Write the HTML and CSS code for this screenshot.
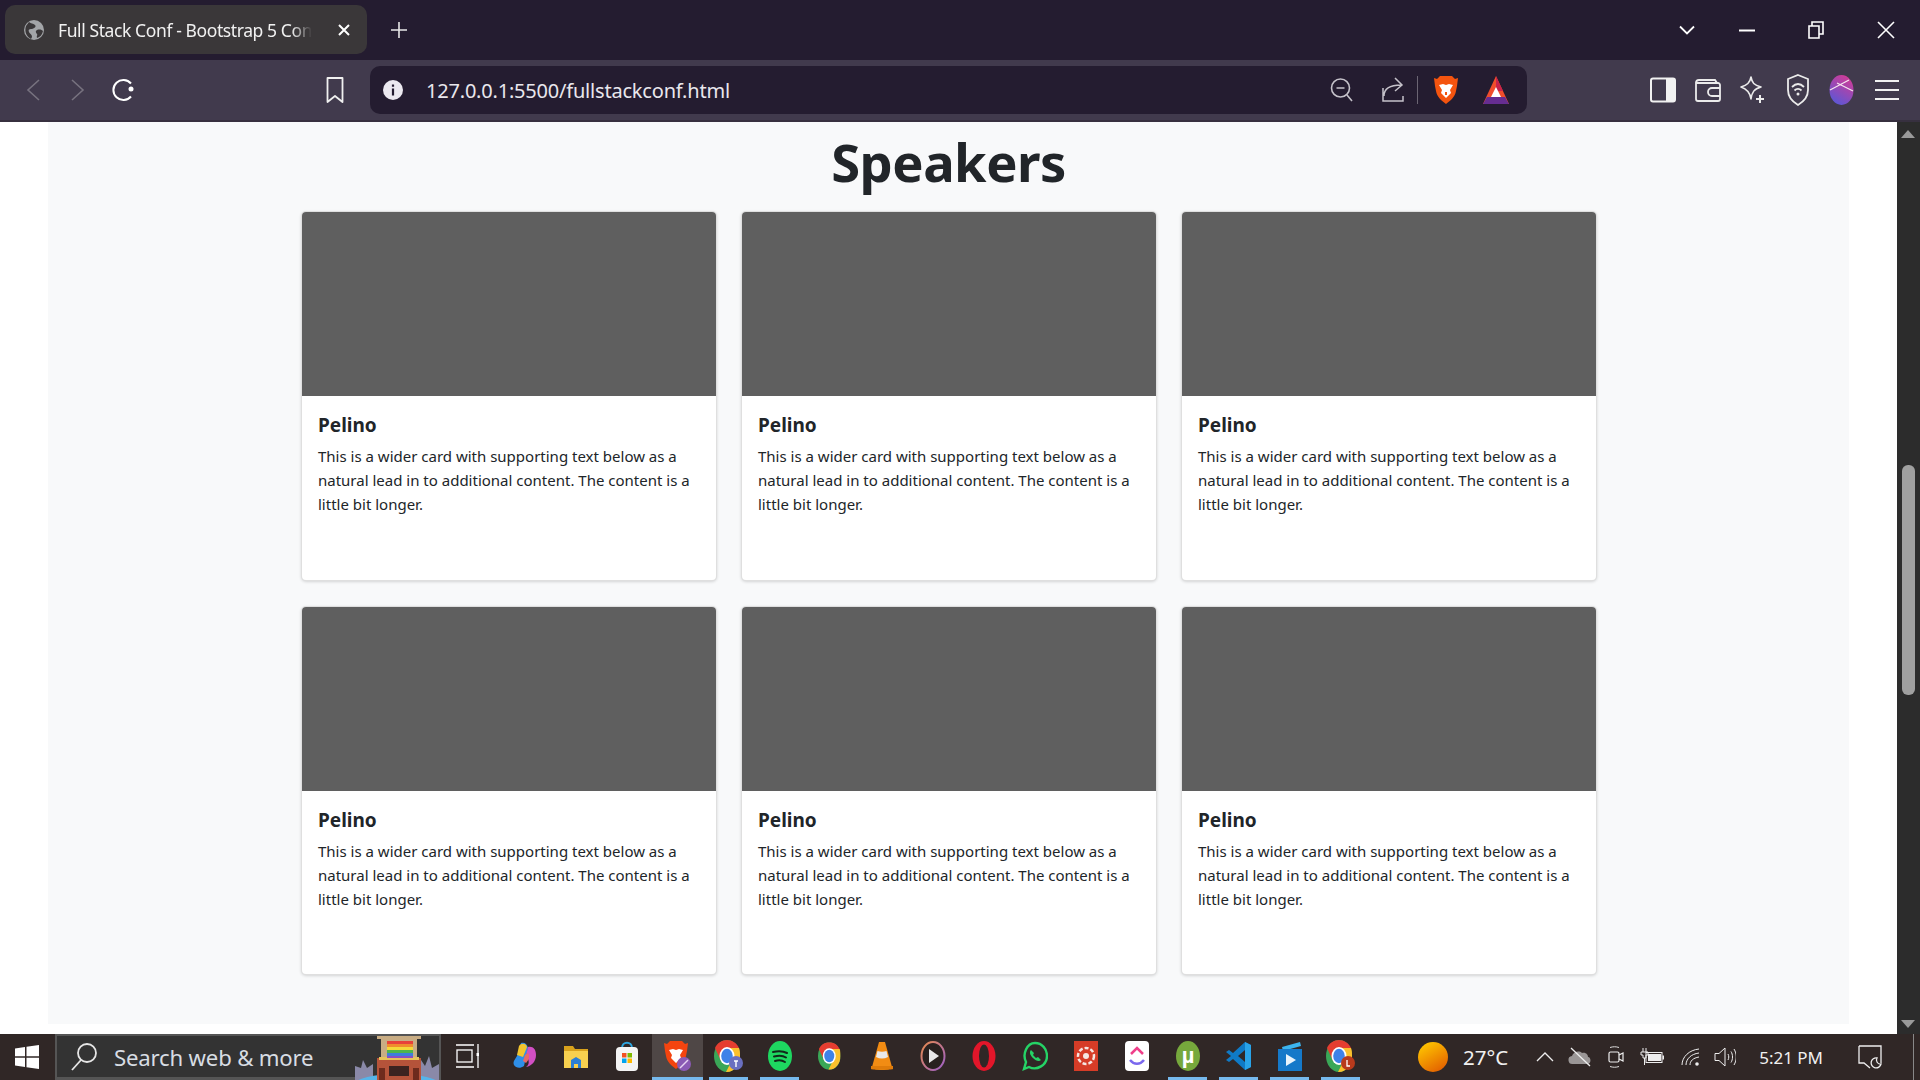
FILE: index.html
```html
<!DOCTYPE html>
<html lang="en">
<head>
    <meta charset="UTF-8">
    <title>Full Stack Conf - Bootstrap 5 Conference</title>
    <link rel="stylesheet" href="styles.css">
</head>
<body>
<div class="tabbar">
    <div class="tab">
        <svg class="favicon" width="22" height="22" viewBox="0 0 22 22"><circle cx="11" cy="11" r="10" fill="#a3a5a8"/><path d="M6 3c2 2 4 1 6 3s-2 4-4 4-3 1-2 3 3 2 3 5l-1 2C4 18 1 13 3 7zM14 11c3-1 5 0 6 1-1 4-3 6-6 7-1-2 1-3 0-4s-2-3 0-4z" fill="#3a3739"/></svg>
        <span class="tab-title">Full Stack Conf - Bootstrap 5 Con</span>
        <svg class="tab-close" width="12" height="12" viewBox="0 0 12 12"><path d="M1 1l10 10M11 1L1 11" stroke="#fff" stroke-width="2"/></svg>
    </div>
    <svg class="new-tab" width="16" height="16" viewBox="0 0 16 16"><path d="M8 0v16M0 8h16" stroke="#e8e8e8" stroke-width="1.6"/></svg>
    <div class="window-controls">
        <svg class="win-btn" width="16" height="10" viewBox="0 0 16 10"><path d="M1 1.5l7 7 7-7" fill="none" stroke="#fff" stroke-width="1.8"/></svg>
        <svg class="win-btn" width="16" height="3" viewBox="0 0 16 3"><path d="M0 1.5h16" stroke="#fff" stroke-width="2"/></svg>
        <svg class="win-btn" width="16" height="18" viewBox="0 0 16 18"><path d="M1 5h10v12H1zM4 5V1h11v12h-4" fill="none" stroke="#fff" stroke-width="1.6"/></svg>
        <svg class="win-btn" width="18" height="18" viewBox="0 0 18 18"><path d="M1 1l16 16M17 1L1 17" stroke="#fff" stroke-width="1.6"/></svg>
    </div>
</div>

<div class="toolbar">
    <div class="nav-buttons">
        <svg width="16" height="24" viewBox="0 0 16 24"><path d="M14 2L3 12l11 10" fill="none" stroke="#77727f" stroke-width="1.6"/></svg>
        <svg class="nav-forward" width="16" height="24" viewBox="0 0 16 24"><path d="M2 2l11 10L2 22" fill="none" stroke="#77727f" stroke-width="1.6"/></svg>
        <svg class="nav-reload" width="26" height="26" viewBox="0 0 26 26"><path d="M21 6.500A10 10 0 1 0 21 19.500" fill="none" stroke="#fff" stroke-width="2"/><circle cx="21" cy="12" r="2.500" fill="#fff"/></svg>
    </div>
    <svg class="bookmark" width="20" height="28" viewBox="0 0 20 28"><path d="M2.500 2h15v24l-7.500-6-7.500 6z" fill="none" stroke="#f0f0f0" stroke-width="1.8" stroke-linejoin="round"/></svg>
    <div class="urlbar">
        <svg class="info" width="20" height="20" viewBox="0 0 20 20"><circle cx="10" cy="10" r="10" fill="#ece9f0"/><path d="M10 4.500v2.200M10 8.500v7" stroke="#241c30" stroke-width="2.200"/></svg>
        <span class="url">127.0.0.1:5500/fullstackconf.html</span>
        <div class="url-actions">
            <svg width="24" height="26" viewBox="0 0 24 26"><circle cx="10.500" cy="11" r="9" fill="none" stroke="#c5c2ca" stroke-width="1.600"/><path d="M6.500 11h8M17 18l5 6" stroke="#c5c2ca" stroke-width="1.600"/></svg>
            <svg class="share" width="24" height="28" viewBox="0 0 24 28"><path d="M2 12v13h20v-5M3 20c0-7 5-11 17-11M14 2l7 7-7 6" fill="none" stroke="#c5c2ca" stroke-width="1.500"/></svg>
            <span class="url-sep"></span>
            <svg class="brave-shield" width="24" height="30" viewBox="0 0 24 30"><path d="M6 1h12l3 3 3-1-1 8-1 5c-1 6-6 10-10 13C8 26 3 22 2 16L1 11 0 3l3 1z" fill="#f4540f"/><path d="M5 10l4-1 3 1 3-1 4 1-3 5 1 3-5 5-5-5 1-3z" fill="#fff"/><path d="M11 17h2v3h-2z" fill="#f4540f"/></svg>
            <svg class="bat" width="26" height="28" viewBox="0 0 26 28"><path d="M13 0l13 28H0z" fill="#f14d2c"/><path d="M13 0l7 15H13z" fill="#c9234a"/><path d="M0 28l4-7h18l4 7z" fill="#662d91"/><path d="M13 11l5 10H8z" fill="#fff"/></svg>
        </div>
    </div>
    <div class="toolbar-icons">
        <svg width="26" height="26" viewBox="0 0 26 26"><rect x="1" y="1.500" width="24" height="23" rx="2" fill="none" stroke="#f2f2f2" stroke-width="2"/><path d="M16 1.500h7a2 2 0 0 1 2 2v19a2 2 0 0 1-2 2h-7z" fill="#f2f2f2"/></svg>
        <svg width="26" height="26" viewBox="0 0 26 26"><path d="M1 6a3 3 0 0 1 3-3h16l2 3M1 6v16a2 2 0 0 0 2 2h20a2 2 0 0 0 2-2V8a2 2 0 0 0-2-2H1zM25 11h-8a3 3 0 0 0 0 8h8" fill="none" stroke="#ebebeb" stroke-width="1.800"/></svg>
        <svg width="26" height="30" viewBox="0 0 26 30"><path d="M12 2c1 6 3 8 10 10-7 2-9 5-10 12-1-7-4-10-10-12 6-2 9-4 10-10z" fill="none" stroke="#ebebeb" stroke-width="1.600" stroke-linejoin="round"/><path d="M21 20v8M17 24h8" stroke="#ebebeb" stroke-width="2"/></svg>
        <svg width="24" height="32" viewBox="0 0 24 32"><path d="M12 1l10 4v11c0 7-5 12-10 15C7 28 2 23 2 16V5z" fill="none" stroke="#ebebeb" stroke-width="1.800"/><path d="M6 13c4-4 8-4 12 0M8.500 16.500c2-2 5-2 7 0" fill="none" stroke="#ebebeb" stroke-width="1.800"/><circle cx="12" cy="20" r="1.500" fill="#ebebeb"/></svg>
        <svg width="25" height="30" viewBox="0 0 25 30"><defs><linearGradient id="prof" x1="0.800" y1="0" x2="0.300" y2="1"><stop offset="0" stop-color="#d63a94"/><stop offset="1" stop-color="#5b57d6"/></linearGradient></defs><ellipse cx="12.500" cy="15" rx="12" ry="15" fill="url(#prof)"/><path d="M1 15L20 5M8 8l16 8" stroke="#f6e4ef" stroke-width="1.200"/></svg>
        <svg width="26" height="22" viewBox="0 0 26 22"><path d="M1 2h24M1 11h24M1 20h24" stroke="#f2f2f2" stroke-width="2"/></svg>
    </div>
</div>

<div class="viewport">
    <main class="page">
        <section class="speakers">
            <h1>Speakers</h1>
            <div class="card-grid">
                <div class="card">
                    <div class="card-img"></div>
                    <div class="card-body">
                        <h5>Pelino</h5>
                        <p>This is a wider card with supporting text below as a natural lead in to additional content. The content is a little bit longer.</p>
                    </div>
                </div>
                <div class="card">
                    <div class="card-img"></div>
                    <div class="card-body">
                        <h5>Pelino</h5>
                        <p>This is a wider card with supporting text below as a natural lead in to additional content. The content is a little bit longer.</p>
                    </div>
                </div>
                <div class="card">
                    <div class="card-img"></div>
                    <div class="card-body">
                        <h5>Pelino</h5>
                        <p>This is a wider card with supporting text below as a natural lead in to additional content. The content is a little bit longer.</p>
                    </div>
                </div>
                <div class="card">
                    <div class="card-img"></div>
                    <div class="card-body">
                        <h5>Pelino</h5>
                        <p>This is a wider card with supporting text below as a natural lead in to additional content. The content is a little bit longer.</p>
                    </div>
                </div>
                <div class="card">
                    <div class="card-img"></div>
                    <div class="card-body">
                        <h5>Pelino</h5>
                        <p>This is a wider card with supporting text below as a natural lead in to additional content. The content is a little bit longer.</p>
                    </div>
                </div>
                <div class="card">
                    <div class="card-img"></div>
                    <div class="card-body">
                        <h5>Pelino</h5>
                        <p>This is a wider card with supporting text below as a natural lead in to additional content. The content is a little bit longer.</p>
                    </div>
                </div>
            </div>
        </section>
    </main>
    <div class="scrollbar">
        <span class="arrow-up"></span>
        <span class="thumb"></span>
        <span class="arrow-down"></span>
    </div>
</div>

<footer class="taskbar">
    <div class="start">
        <svg width="24" height="24" viewBox="0 0 24 24"><path d="M0 3.500l10-1.500v9.200H0zM11.500 1.800L24 0v11.200H11.500zM0 12.800h10V22L0 20.500zM11.500 12.800H24V24l-12.500-1.800z" fill="#fff"/></svg>
    </div>
    <div class="search">
        <svg width="28" height="30" viewBox="0 0 28 30"><circle cx="17" cy="11" r="9" fill="none" stroke="#e6e6e6" stroke-width="1.800"/><path d="M11 18L2 28" stroke="#e6e6e6" stroke-width="1.800"/></svg>
        <span class="search-text">Search web &amp; more</span>
        <svg class="search-art" width="88" height="44" viewBox="0 0 84 44"><path d="M0 44V30l6 2 2-8 4 8 6-4v16zM66 44V24l4 6 4-10 3 12 7-4v16z" fill="#8a89a8"/><ellipse cx="42" cy="48" rx="42" ry="10" fill="#56b4e9"/><path d="M22 0h44v3H22zM26 3h36v20H26z" fill="#c9ad84"/><path d="M22 22h44v22H22z" fill="#b5533a"/><path d="M24 21h40v3H24z" fill="#e8c35a"/><path d="M34 30h20v10H34z" fill="#3b2320"/><path d="M24 32h6v12h-6zM58 32h6v12h-6z" fill="#6e2b1d"/><rect x="32" y="5" width="26" height="3" fill="#e8413a"/><rect x="32" y="8" width="26" height="3" fill="#f08c2e"/><rect x="32" y="11" width="26" height="3" fill="#f4d93a"/><rect x="32" y="14" width="26" height="3" fill="#4fb64a"/><rect x="32" y="17" width="26" height="3" fill="#3e7fd9"/><rect x="32" y="20" width="26" height="2" fill="#8b4fc2"/></svg>
    </div>
    <div class="task-icons">
        <div class="task-icon task-view"><svg width="24" height="24" viewBox="0 0 24 24"><path d="M1 1h18M1 23h18M23 0v24" stroke="#fff" stroke-width="1.300" fill="none"/><rect x="2" y="6" width="15" height="12" fill="none" stroke="#fff" stroke-width="1.300"/><rect x="21.500" y="9" width="3" height="3" fill="#fff"/></svg></div>
        <div class="task-icon"><svg width="24" height="28" viewBox="0 0 24 28"><path d="M8 1c4-1 6 1 7 5l-4 18c-4 3-8 2-10-1-2-4 3-7 4-12z" fill="#2f8fe8"/><path d="M6 4c2-3 7-3 8 1l-4 10-6-2z" fill="#f3c52e"/><path d="M15 5c5-1 8 2 8 8 0 6-4 11-10 12 5-3 2-9 0-12z" fill="#d24fc4"/><path d="M12 13l3-2c2 3 1 7-2 10l-3-2z" fill="#e56a6a"/></svg></div>
        <div class="task-icon"><svg width="24" height="24" viewBox="0 0 24 24"><path d="M0 2h9l2 3h13v3H0z" fill="#d9a21c"/><path d="M0 7h24v17H0z" fill="#f7d04f"/><path d="M7 24v-8l5-3 5 3v8h-3v-4h-4v4z" fill="#2a7fd6"/></svg></div>
        <div class="task-icon"><svg width="24" height="30" viewBox="0 0 24 30"><path d="M7 7c0-7 10-7 10 0" fill="none" stroke="#2da6e0" stroke-width="2"/><rect x="1" y="6" width="22" height="24" rx="4" fill="#f4f4f4"/><rect x="7" y="12" width="4.500" height="4.500" fill="#f25022"/><rect x="12.500" y="12" width="4.500" height="4.500" fill="#7fba00"/><rect x="7" y="17.500" width="4.500" height="4.500" fill="#00a4ef"/><rect x="12.500" y="17.500" width="4.500" height="4.500" fill="#ffb900"/></svg></div>
        <div class="task-icon active"><svg width="28" height="32" viewBox="0 0 28 32"><path d="M6 1h12l3 3 3-1-1 8-1 5c-1 6-6 10-10 13C8 26 3 22 2 16L1 11 0 3l3 1z" fill="#f4440f"/><path d="M5 10l4-1 3 1 3-1 4 1-3 5 1 3-5 5-5-5 1-3z" fill="#fff"/><circle cx="20" cy="24" r="7" fill="#8a5ab5"/><path d="M16 28l8-8" stroke="#e7d4f2" stroke-width="1.500"/></svg></div>
        <div class="task-icon running"><svg width="30" height="32" viewBox="0 0 30 32"><use href="#chrome-logo"/><circle cx="22" cy="23" r="7" fill="#6a6fc0"/><path d="M20 21h4M22 21v6" stroke="#fff" stroke-width="1.400"/></svg></div>
        <div class="task-icon running"><svg width="24" height="30" viewBox="0 0 24 30"><ellipse cx="12" cy="15" rx="12" ry="15" fill="#1ed760"/><path d="M5 11c5-1 10-1 14 1M6 15.500c4-1 9-1 12 1M7 20c3-1 7-1 10 1" fill="none" stroke="#12271a" stroke-width="2" stroke-linecap="round"/></svg></div>
        <div class="task-icon"><svg width="26" height="32" viewBox="0 0 30 32"><use href="#chrome-logo"/></svg></div>
        <div class="task-icon"><svg width="22" height="30" viewBox="0 0 22 30"><path d="M8 1h6l7 25c0 4-20 4-20 0z" fill="#f28c13"/><path d="M6.500 10c3 1 6 1 9 0l1.500 6c-4 2-8 2-12 0z" fill="#e9e9e9"/><path d="M0 25h22v3c0 1-22 1-22 0z" fill="#e07c0a"/></svg></div>
        <div class="task-icon"><svg width="26" height="30" viewBox="0 0 26 30"><defs><linearGradient id="playring" x1="0" y1="0" x2="1" y2="1"><stop offset="0" stop-color="#e78a4c"/><stop offset="1" stop-color="#9b5fc9"/></linearGradient></defs><ellipse cx="13" cy="15" rx="11.500" ry="14" fill="#28211f" stroke="url(#playring)" stroke-width="2"/><path d="M9 8l10 7-10 7z" fill="#e8e8e8"/></svg></div>
        <div class="task-icon"><svg width="24" height="30" viewBox="0 0 24 30"><ellipse cx="12" cy="15" rx="11.500" ry="15" fill="#e2162a"/><ellipse cx="12" cy="15" rx="5" ry="11.500" fill="#2f2726"/></svg></div>
        <div class="task-icon"><svg width="26" height="30" viewBox="0 0 26 30"><path d="M2 28l2-7C0 13 5 2 13 2c7 0 12 6 12 13 0 9-10 15-18 11z" fill="none" stroke="#25d366" stroke-width="2.400"/><path d="M9 9c-2 2-1 5 2 8s6 4 8 2l-3-3-2 1-3-3 1-2z" fill="#25d366"/></svg></div>
        <div class="task-icon"><svg width="24" height="30" viewBox="0 0 24 30"><rect width="24" height="30" fill="#d63c27"/><circle cx="12" cy="15" r="8" fill="none" stroke="#f5e6e2" stroke-width="2.500" stroke-dasharray="4 2"/><circle cx="12" cy="15" r="3" fill="#f5e6e2"/></svg></div>
        <div class="task-icon"><svg width="24" height="30" viewBox="0 0 24 30"><rect width="24" height="30" rx="4" fill="#fff"/><path d="M6 13l6-6 6 6" fill="none" stroke="#ef3f8a" stroke-width="2.500"/><path d="M5 19c4 5 10 5 14 0" fill="none" stroke="#7b68ee" stroke-width="2.500"/></svg></div>
        <div class="task-icon running"><svg width="24" height="30" viewBox="0 0 24 30"><ellipse cx="12" cy="15" rx="12" ry="15" fill="#76a83c"/><text class="mu" x="12" y="22" text-anchor="middle">µ</text></svg></div>
        <div class="task-icon running"><svg width="26" height="30" viewBox="0 0 26 30"><path d="M19 1l6 3v22l-6 3L7 18l-4 3-3-2 5-4-5-4 3-2 4 3z" fill="#0f7ac6"/><path d="M19 9l-7 6 7 6z" fill="#2f2726"/><path d="M19 1l6 3v22l-6 3z" fill="#29a3e8"/></svg></div>
        <div class="task-icon running"><svg width="24" height="30" viewBox="0 0 24 30"><path d="M4 6l18-5 1 4-18 5z" fill="#3cb4ee"/><rect x="0" y="8" width="24" height="22" fill="#1579c9"/><path d="M8 13l10 6-10 6z" fill="#e9f4fb"/></svg></div>
        <div class="task-icon running"><svg width="30" height="32" viewBox="0 0 30 32"><use href="#chrome-logo"/><circle cx="22" cy="23" r="7" fill="#b83a1c"/><path d="M21 20v6h3" fill="none" stroke="#fff" stroke-width="1.300"/></svg></div>
    </div>
    <div class="tray">
        <svg class="sun" width="30" height="30" viewBox="0 0 30 30"><defs><linearGradient id="sun" x1="0.200" y1="0" x2="0.800" y2="1"><stop offset="0" stop-color="#ffc800"/><stop offset="1" stop-color="#e25d00"/></linearGradient></defs><circle cx="15" cy="15" r="15" fill="url(#sun)"/></svg>
        <span class="temp">27°C</span>
        <svg class="tray-chevron" width="18" height="10" viewBox="0 0 18 10"><path d="M1 9l8-8 8 8" fill="none" stroke="#eee" stroke-width="1.300"/></svg>
        <svg class="tray-cloud" width="24" height="20" viewBox="0 0 24 20"><path d="M5 17a4 4 0 0 1-1-8c1-4 7-6 10-3 4-1 6 2 6 4 3 0 4 7-1 7z" fill="#9a9696"/><path d="M3 1l19 18" stroke="#eee" stroke-width="1.300"/></svg>
        <svg class="tray-cam" width="16" height="22" viewBox="0 0 16 22"><path d="M2 1.500c3-1 6-1 9 0M2 20.500c3 1 6 1 9 0" fill="none" stroke="#ddd" stroke-width="1"/><rect x="1" y="6" width="10" height="10" rx="1.500" fill="none" stroke="#eee" stroke-width="1.200"/><path d="M11 9l4-2v8l-4-2" fill="none" stroke="#eee" stroke-width="1.200"/></svg>
        <svg class="tray-battery" width="24" height="18" viewBox="0 0 24 18"><path d="M3 0v4M6 0v4M1 4h7v3H6v3H3V7H1zM4.500 10v7" fill="none" stroke="#eee" stroke-width="1"/><rect x="6" y="4.500" width="16" height="10" fill="none" stroke="#eee" stroke-width="1"/><rect x="8" y="6" width="13" height="7" fill="#eee"/><rect x="22.500" y="7.500" width="1.500" height="4" fill="#eee"/></svg>
        <svg class="tray-wifi" width="19" height="18" viewBox="0 0 19 18"><path d="M1 17C1 9 8 2 18 1M5 17c0-6 5-11 13-12M9 17c0-4 3-7 9-8" fill="none" stroke="#eee" stroke-width="1"/><circle cx="16" cy="16" r="1.800" fill="#eee"/></svg>
        <svg class="tray-volume" width="22" height="20" viewBox="0 0 22 20"><path d="M1 6.500h4L11 1v18l-6-5.500H1z" fill="none" stroke="#eee" stroke-width="1"/><path d="M14 7c1 2 1 4 0 6M17 4.500c2 3 2 8 0 11M20 2c3 5 3 11 0 16" fill="none" stroke="#eee" stroke-width="1"/></svg>
        <span class="clock">5:21 PM</span>
        <svg class="notify" width="24" height="24" viewBox="0 0 24 24"><path d="M1 1h22v17M1 1v17h5l6 5" fill="none" stroke="#eee" stroke-width="1.300"/><path d="M19 13a5 5 0 1 0 4 6 4 4 0 0 1-4-6z" fill="none" stroke="#eee" stroke-width="1.300"/></svg>
        <span class="show-desktop"></span>
    </div>
</footer>

<svg class="defs" width="0" height="0">
    <symbol id="chrome-logo" viewBox="0 0 26 32" width="26" height="32">
        <ellipse cx="13" cy="16" rx="13" ry="16" fill="#3aa757"/>
        <path d="M13 0C8 0 3 3 1 8l6 13 6-13h12c-2-5-7-8-12-8z" fill="#e53d30"/>
        <path d="M25 8H13l5 12-6 12h1c7 0 13-7 13-16 0-3 0-6-1-8z" fill="#fbc02d"/>
        <ellipse cx="13" cy="16" rx="7.500" ry="9" fill="#fff"/>
        <ellipse cx="13" cy="16" rx="5.800" ry="7.200" fill="#3f82e8"/>
    </symbol>
</svg>
</body>
</html>
```

FILE: styles.css
```css
* {
    box-sizing: border-box;
}
html, body {
    height: 100%;
}
body {
    margin: 0;
    display: flex;
    flex-direction: column;
    height: 1080px;
    overflow: hidden;
    font-family: "Noto Sans", "Open Sans", sans-serif;
    background-color: #fff;
    color: #212529;
}
svg {
    display: block;
    flex-shrink: 0;
}
.defs {
    position: absolute;
}

/* browser chrome */
.tabbar {
    height: 60px;
    display: flex;
    align-items: center;
    padding-left: 5px;
    background-color: #241c30;
}
.tab {
    width: 362px;
    height: 49px;
    margin-top: -1px;
    display: flex;
    align-items: center;
    padding: 0 17px 0 18px;
    border-radius: 10px;
    background-color: #3a3739;
}
.favicon {
    margin-right: 13px;
}
.tab-title {
    white-space: nowrap;
    font-size: 17.500px;
    color: #f1f1f1;
    letter-spacing: -0.4px;
    -webkit-mask-image: linear-gradient(to right, #000 92%, transparent 100%);
    mask-image: linear-gradient(to right, #000 92%, transparent 100%);
}
.tab-close {
    margin-left: auto;
}
.new-tab {
    margin-left: 24px;
}
.window-controls {
    margin-left: auto;
    display: flex;
    align-items: center;
}
.win-btn:nth-child(1) {
    margin-right: 44px;
}
.win-btn:nth-child(2) {
    margin-right: 53px;
}
.win-btn:nth-child(3) {
    margin-right: 53px;
}
.win-btn:nth-child(4) {
    margin-right: 25px;
}
.toolbar {
    height: 62px;
    display: flex;
    align-items: center;
    padding: 0 20px 0 25px;
    background-color: #413a4d;
    border-bottom: 2px solid #37303f;
}
.nav-buttons {
    display: flex;
    align-items: center;
}
.nav-forward {
    margin-left: 29px;
}
.nav-reload {
    margin-left: 24px;
}
.bookmark {
    margin-left: 189px;
}
.urlbar {
    width: 1157px;
    height: 48px;
    margin-left: 25px;
    display: flex;
    align-items: center;
    padding: 0 18px 0 13px;
    border-radius: 10px;
    background-color: #241c30;
}
.url {
    margin-left: 23px;
    font-size: 20px;
    color: #e9e7ed;
    letter-spacing: -0.2px;
}
.url-actions {
    margin-left: auto;
    display: flex;
    align-items: center;
}
.share {
    margin-left: 27px;
}
.url-sep {
    width: 1px;
    height: 28px;
    margin: 0 16px 0 12px;
    background-color: #6b6573;
}
.bat {
    margin-left: 25px;
}
.toolbar-icons {
    margin-left: auto;
    display: flex;
    align-items: center;
    gap: 19px;
}
.toolbar-icons svg:nth-child(3) {
    margin-left: -1px;
}
.toolbar-icons svg:nth-child(4) {
    margin-left: 2px;
}
.toolbar-icons svg:nth-child(6) {
    margin-left: 1px;
}

/* page */
.viewport {
    flex: 1;
    display: flex;
    min-height: 0;
}
.page {
    flex: 1;
    padding: 0 48px 10px;
    background-color: #fff;
}
.speakers {
    height: 100%;
    background-color: #f8f9fa;
}
h1 {
    margin: 0;
    padding-top: 5px;
    height: 89px;
    text-align: center;
    font-size: 52.500px;
    line-height: 70px;
    font-weight: 700;
    letter-spacing: -0.5px;
}
.card-grid {
    width: 1296px;
    margin-left: 253px;
    display: grid;
    grid-template-columns: repeat(3, 416px);
    grid-auto-rows: 369.500px;
    column-gap: 24px;
    row-gap: 25px;
}
.card {
    background-color: #fff;
    border: 1px solid rgba(0,0,0,0.125);
    border-radius: 5px;
    box-shadow: 0 1px 3px rgba(0,0,0,0.15);
    overflow: hidden;
}
.card-img {
    height: 184px;
    background-color: #5f5f5f;
}
.card-body {
    padding: 17px 16px 16px;
}
h5 {
    margin: 0 0 7px;
    font-size: 19px;
    line-height: 24px;
    font-weight: 700;
}
p {
    margin: 0;
    font-size: 15px;
    line-height: 24px;
}
.scrollbar {
    width: 23px;
    position: relative;
    background-color: #2c2c2c;
}
.arrow-up, .arrow-down {
    position: absolute;
    left: 4px;
    width: 0;
    height: 0;
    border-left: 7.500px solid transparent;
    border-right: 7.500px solid transparent;
}
.arrow-up {
    top: 8px;
    border-bottom: 8px solid #9a9a9a;
}
.arrow-down {
    bottom: 6px;
    border-top: 8px solid #9a9a9a;
}
.thumb {
    position: absolute;
    top: 343px;
    left: 5px;
    width: 13px;
    height: 230px;
    border-radius: 6px;
    background-color: #a0a0a0;
}

/* taskbar */
.taskbar {
    height: 46px;
    display: flex;
    align-items: center;
    background-color: #302726;
    color: #f0f0f0;
}
.start {
    width: 55px;
    height: 46px;
    display: flex;
    align-items: center;
    justify-content: center;
    padding-right: 2px;
}
.search {
    width: 386px;
    height: 46px;
    display: flex;
    align-items: center;
    padding-left: 13px;
    border: 2px solid #555;
    border-bottom-width: 3px;
    background-color: #333;
    position: relative;
}
.search-text {
    margin: 2px 0 0 16px;
    font-size: 22.200px;
    color: #d8dde3;
    letter-spacing: -0.2px;
}
.search-art {
    position: absolute;
    right: -2px;
    bottom: -3px;
}
.task-icons {
    display: flex;
    height: 46px;
}
.task-icon {
    width: 51px;
    height: 46px;
    display: flex;
    align-items: center;
    justify-content: center;
    border-bottom: 3px solid transparent;
    padding-top: 1px;
}
.task-view {
    margin-right: 7px;
}
.task-icon.running {
    border-image: linear-gradient(to right, transparent 7px, #76b9ed 7px, #76b9ed 44px, transparent 44px) 1;
}
.task-icon.active {
    background-color: #4f4746;
    border-bottom-color: #76b9ed;
}
.mu {
    font-family: "Liberation Sans", sans-serif;
    font-size: 22px;
    font-weight: 700;
    fill: #fff;
}
.tray {
    flex: 1;
    display: flex;
    align-items: center;
    position: relative;
    height: 46px;
}
.sun {
    margin-left: 52px;
}
.temp {
    margin-left: 15px;
    font-size: 20.500px;
}
.tray-chevron {
    margin-left: 28px;
}
.tray-cloud {
    margin-left: 14px;
}
.tray-cam {
    margin-left: 16px;
}
.tray-battery {
    margin-left: 16px;
}
.tray-wifi {
    margin-left: 17px;
}
.tray-volume {
    margin-left: 14px;
}
.clock {
    margin-left: 23px;
    font-size: 17px;
}
.notify {
    margin-left: 35px;
}
.show-desktop {
    position: absolute;
    right: 6px;
    top: 0;
    width: 1px;
    height: 46px;
    background-color: #888;
}
```
